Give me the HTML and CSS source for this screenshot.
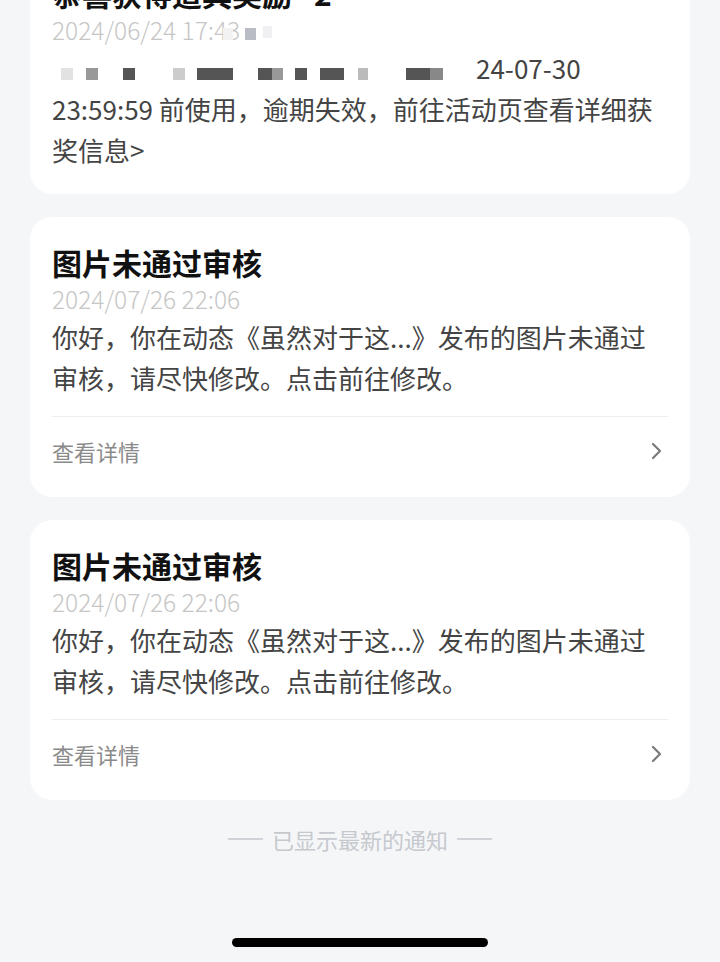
FILE: index.html
```html
<!DOCTYPE html>
<html>
<head>
    <meta charset="utf-8">
    <title>通知</title>
    <link rel="stylesheet" href="styles.css">
</head>
<body>
    <div class="list">
        <div class="card">
            <div class="title">恭喜获得道具奖励 *2</div>
            <div class="date">2024/06/24 17:43<svg class="blur-date" width="60" height="14" viewBox="0 0 60 14"><rect x="0" y="2" width="10" height="12" fill="#f2f2f3"/><rect x="22" y="2" width="11" height="12" fill="#b9bcc2"/><rect x="40" y="0" width="9" height="12" fill="#f0f0f2"/></svg></div>
            <div class="text">
                <svg class="mosaic" width="424" height="12" viewBox="0 0 424 12">
                    <rect x="9" y="0" width="12" height="12" fill="#e2e2e2"/>
                    <rect x="34" y="0" width="12" height="12" fill="#999"/>
                    <rect x="71" y="0" width="12" height="12" fill="#555"/>
                    <rect x="121" y="0" width="12" height="12" fill="#ccc"/>
                    <rect x="145" y="0" width="36" height="12" fill="#555"/>
                    <rect x="206" y="0" width="14" height="12" fill="#555"/>
                    <rect x="220" y="0" width="11" height="12" fill="#999"/>
                    <rect x="243" y="0" width="12" height="12" fill="#555"/>
                    <rect x="268" y="0" width="24" height="12" fill="#555"/>
                    <rect x="306" y="0" width="10" height="12" fill="#bbb"/>
                    <rect x="354" y="0" width="24" height="12" fill="#555"/>
                    <rect x="378" y="0" width="13" height="12" fill="#888"/>
                </svg>24-07-30<br>
                23:59:59 前使用，逾期失效，前往活动页查看详细获<br>
                奖信息&gt;
            </div>
        </div>

        <div class="card">
            <div class="title">图片未通过审核</div>
            <div class="date">2024/07/26 22:06</div>
            <div class="text">你好，你在动态《虽然对于这...》发布的图片未通过审核，请尽快修改。点击前往修改。</div>
            <div class="more">
                <span>查看详情</span>
                <svg width="14" height="20" viewBox="0 0 14 20"><path d="M4 3 L11 10 L4 17" fill="none" stroke="#7a7a7a" stroke-width="2.2" stroke-linecap="round" stroke-linejoin="round"/></svg>
            </div>
        </div>

        <div class="card">
            <div class="title">图片未通过审核</div>
            <div class="date">2024/07/26 22:06</div>
            <div class="text">你好，你在动态《虽然对于这...》发布的图片未通过审核，请尽快修改。点击前往修改。</div>
            <div class="more">
                <span>查看详情</span>
                <svg width="14" height="20" viewBox="0 0 14 20"><path d="M4 3 L11 10 L4 17" fill="none" stroke="#7a7a7a" stroke-width="2.2" stroke-linecap="round" stroke-linejoin="round"/></svg>
            </div>
        </div>
    </div>

    <div class="end">
        <span class="dash"></span>
        <span>已显示最新的通知</span>
        <span class="dash"></span>
    </div>

    <div class="home-bar"></div>
</body>
</html>
```

FILE: styles.css
```css
html, body{
    height: 100%;
    overflow: hidden;
}
body{
    margin: 0;
    background-color: #f5f6f8;
    font-family: "Noto Sans CJK SC", "Noto Sans", sans-serif;
    color: #333;
}
.list{
    margin-top: -52px;
    padding: 0 30px;
    display: flex;
    flex-direction: column;
    gap: 23px;
}
.card{
    background-color: #fff;
    border-radius: 22px;
    padding: 26px 22px 12px 22px;
}
.card:first-child{
    padding-bottom: 24px;
}
.title{
    font-size: 30px;
    line-height: 38px;
    font-weight: bold;
    color: #111;
}
.date{
    font-size: 24.5px;
    line-height: 35px;
    font-weight: 300;
    color: #c6c6c6;
    display: flex;
    align-items: center;
}
.blur-date{
    margin-left: -17px;
    margin-top: 6px;
}
.text{
    font-size: 26px;
    line-height: 41px;
    color: #444;
}
.mosaic{
    vertical-align: -1px;
}
.more{
    margin-top: 18px;
    border-top: 1px solid #efefef;
    height: 68px;
    display: flex;
    align-items: center;
    justify-content: space-between;
    font-size: 22px;
    color: #8a8a8a;
}
.more svg{
    margin-right: 5px;
}
.end{
    margin-top: 24px;
    height: 30px;
    display: flex;
    align-items: center;
    justify-content: center;
    gap: 9px;
    font-size: 22px;
    color: #c6c9ce;
}
.dash{
    width: 35px;
    height: 2px;
    background-color: #cfd2d6;
}
.home-bar{
    width: 256px;
    height: 9px;
    margin: 84px auto 0 auto;
    border-radius: 5px;
    background-color: #000;
}
```
